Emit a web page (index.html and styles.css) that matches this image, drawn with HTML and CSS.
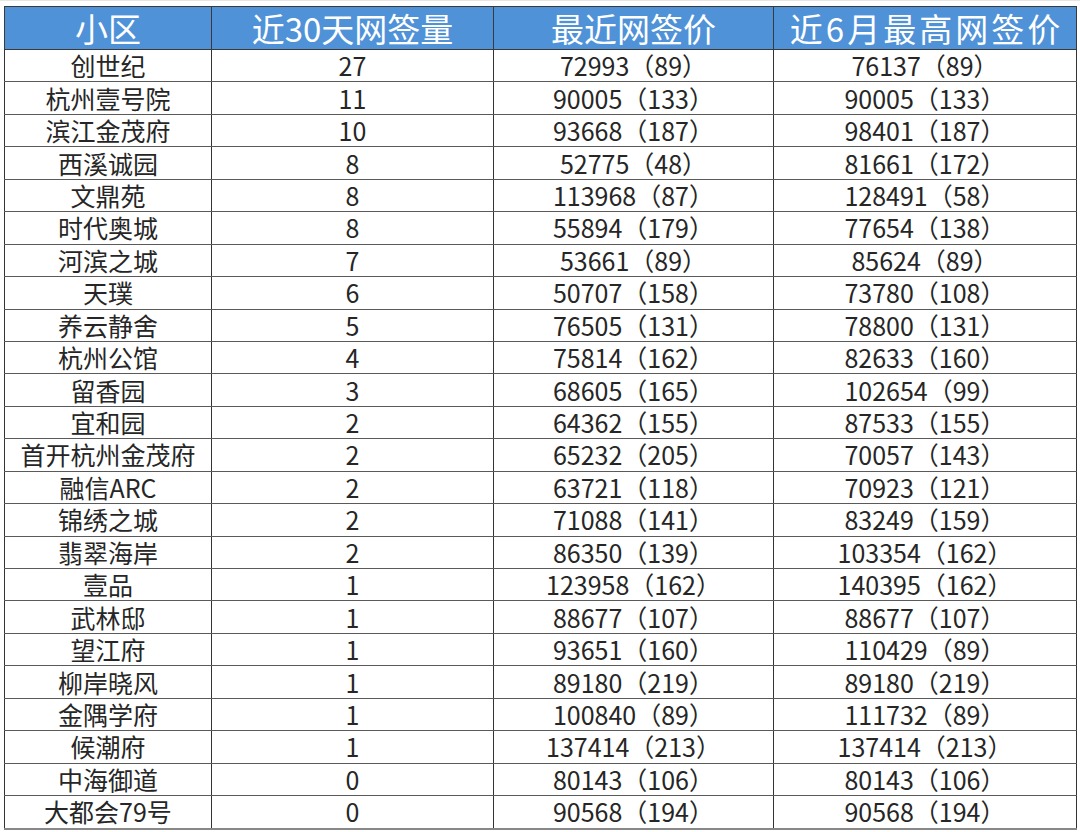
FILE: index.html
```html
<!DOCTYPE html>
<html lang="zh-CN">
<head>
<meta charset="utf-8">
<title>小区网签</title>
<link rel="stylesheet" href="styles.css">
</head>
<body>
<div class="sheet">
<table class="grid">
<colgroup>
<col class="c1"><col class="c2"><col class="c3"><col class="c4">
</colgroup>
<thead>
<tr class="head">
<th>小区</th><th>近30天网签量</th><th>最近网签价</th><th class="wide">近6月最高网签价</th>
</tr>
</thead>
<tbody>
<tr><td>创世纪</td><td>27</td><td>72993（89）</td><td>76137（89）</td></tr>
<tr><td>杭州壹号院</td><td>11</td><td>90005（133）</td><td>90005（133）</td></tr>
<tr><td>滨江金茂府</td><td>10</td><td>93668（187）</td><td>98401（187）</td></tr>
<tr><td>西溪诚园</td><td>8</td><td>52775（48）</td><td>81661（172）</td></tr>
<tr><td>文鼎苑</td><td>8</td><td>113968（87）</td><td>128491（58）</td></tr>
<tr><td>时代奥城</td><td>8</td><td>55894（179）</td><td>77654（138）</td></tr>
<tr><td>河滨之城</td><td>7</td><td>53661（89）</td><td>85624（89）</td></tr>
<tr><td>天璞</td><td>6</td><td>50707（158）</td><td>73780（108）</td></tr>
<tr><td>养云静舍</td><td>5</td><td>76505（131）</td><td>78800（131）</td></tr>
<tr><td>杭州公馆</td><td>4</td><td>75814（162）</td><td>82633（160）</td></tr>
<tr><td>留香园</td><td>3</td><td>68605（165）</td><td>102654（99）</td></tr>
<tr><td>宜和园</td><td>2</td><td>64362（155）</td><td>87533（155）</td></tr>
<tr><td>首开杭州金茂府</td><td>2</td><td>65232（205）</td><td>70057（143）</td></tr>
<tr><td>融信ARC</td><td>2</td><td>63721（118）</td><td>70923（121）</td></tr>
<tr><td>锦绣之城</td><td>2</td><td>71088（141）</td><td>83249（159）</td></tr>
<tr><td>翡翠海岸</td><td>2</td><td>86350（139）</td><td>103354（162）</td></tr>
<tr><td>壹品</td><td>1</td><td>123958（162）</td><td>140395（162）</td></tr>
<tr><td>武林邸</td><td>1</td><td>88677（107）</td><td>88677（107）</td></tr>
<tr><td>望江府</td><td>1</td><td>93651（160）</td><td>110429（89）</td></tr>
<tr><td>柳岸晓风</td><td>1</td><td>89180（219）</td><td>89180（219）</td></tr>
<tr><td>金隅学府</td><td>1</td><td>100840（89）</td><td>111732（89）</td></tr>
<tr><td>候潮府</td><td>1</td><td>137414（213）</td><td>137414（213）</td></tr>
<tr><td>中海御道</td><td>0</td><td>80143（106）</td><td>80143（106）</td></tr>
<tr><td>大都会79号</td><td>0</td><td>90568（194）</td><td>90568（194）</td></tr>
</tbody>
</table>
</div>
</body>
</html>
```
FILE: styles.css
```css
html, body {
  margin: 0;
  padding: 0;
  background: #ffffff;
}
.sheet {
  padding: 5px 0 0 4px;
  border-top: 1px solid #e6e6e6;
}
.grid {
  border-collapse: collapse;
  table-layout: fixed;
  width: 1072px;
  font-family: "Noto Sans CJK SC", "Noto Sans", sans-serif;
  color: #262626;
}
.c1 { width: 207px; }
.c2 { width: 282px; }
.c3 { width: 280px; }
.c4 { width: 303px; }
.grid th,
.grid td {
  padding: 0;
  text-align: center;
  white-space: nowrap;
}
.grid th {
  height: 42px;
  background: #4f92d8;
  color: #ffffff;
  font-size: 33px;
  font-weight: 400;
  line-height: 42px;
  border: 1px solid #3a3a3a;
}
.grid th.wide {
  letter-spacing: 3px;
  padding-left: 3px;
}
.grid td {
  height: 31.45px;
  font-size: 25px;
  font-weight: 400;
  line-height: 31px;
  border-left: 1px solid #333333;
  border-right: 1px solid #333333;
  border-bottom: 1px solid #5a5a5a;
}
.grid tbody tr:last-child td {
  border-bottom: 2px solid #888888;
}
```
